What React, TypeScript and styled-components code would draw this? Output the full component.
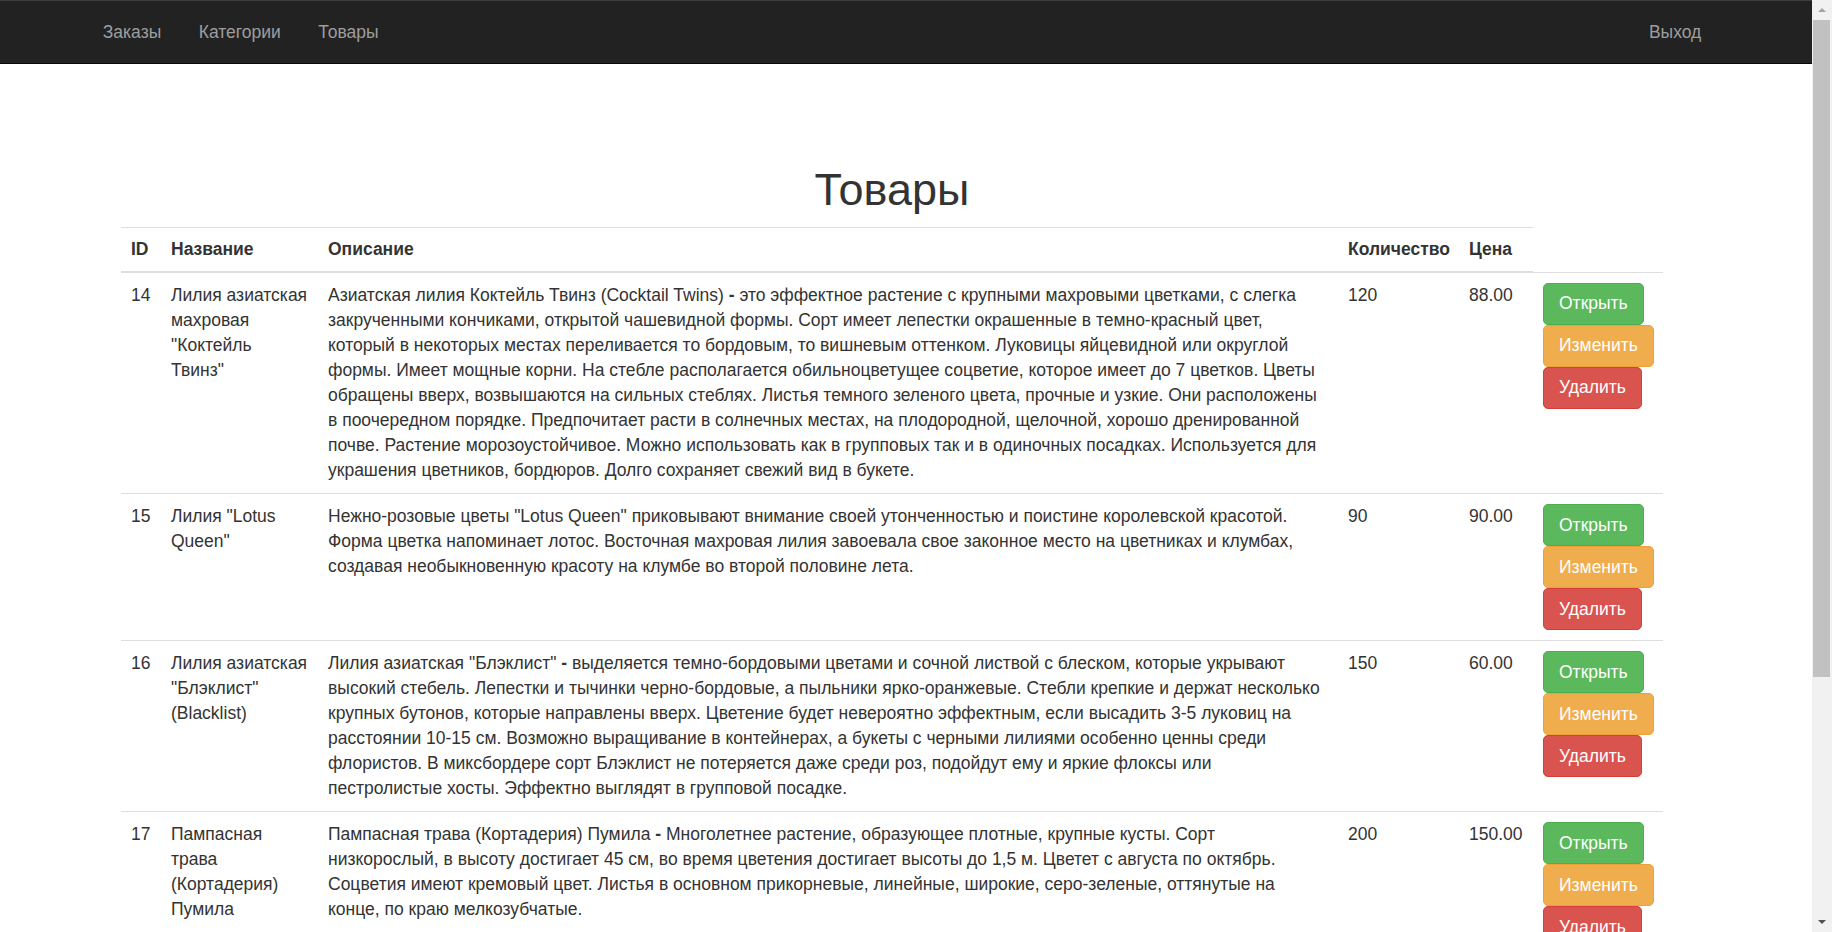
import React from "react";
import styled, { createGlobalStyle } from "styled-components";

const GlobalStyle = createGlobalStyle`
  html, body {
    margin: 0;
    padding: 0;
    height: 100%;
    overflow: hidden;
    background: #fff;
  }
  body {
    font-family: "Liberation Sans", Arial, Helvetica, sans-serif;
    font-size: 17.5px;
    line-height: 25px;
    color: #333;
  }
  #root { height: 100%; }
  *, *::before, *::after { box-sizing: border-box; }
`;

const Shell = styled.div`
  display: flex;
  height: 100vh;
  width: 100vw;
  overflow: hidden;
`;

const Viewport = styled.div`
  flex: 1;
  min-width: 0;
  overflow: hidden;
  display: flex;
  flex-direction: column;
`;

const Navbar = styled.nav`
  flex: none;
  display: flex;
  justify-content: space-between;
  height: 64px;
  background: #222;
  border-top: 1px solid #3d3d3d;
  border-bottom: 1px solid #080808;
  padding: 0 92px 0 84px;
`;

const NavList = styled.ul`
  display: flex;
  margin: 0;
  padding: 0;
  list-style: none;
`;

const NavLink = styled.a`
  display: block;
  padding: 18.5px 18.75px;
  line-height: 25px;
  color: #9d9d9d;
  text-decoration: none;
`;

const Main = styled.main`
  flex: 1;
  padding: 101px 0 0 121px;
`;

const Content = styled.div`
  width: 1542px;
`;

const Title = styled.h1`
  margin: 0 0 12px;
  font-size: 45px;
  line-height: 49.5px;
  font-weight: 500;
  text-align: center;
  color: #333;
`;

const Table = styled.table`
  width: 1542px;
  table-layout: fixed;
  border-collapse: collapse;
  border-spacing: 0;
`;

const Col = styled.col<{ $w: number }>`
  width: ${(p) => p.$w}px;
`;

const HeadCell = styled.th`
  padding: 9.5px 10px 9px;
  text-align: left;
  vertical-align: bottom;
  font-weight: bold;
  border-top: 1px solid #ddd;
  border-bottom: 2px solid #ddd;
`;

const Cell = styled.td`
  padding: 10px;
  vertical-align: top;
  border-top: 1px solid #ddd;
`;

const Actions = styled.div`
  display: flex;
  flex-direction: column;
  align-items: flex-start;
`;

const palette = {
  success: { bg: "#5cb85c", border: "#4cae4c" },
  warning: { bg: "#f0ad4e", border: "#eea236" },
  danger: { bg: "#d9534f", border: "#d43f3a" },
};

type Variant = keyof typeof palette;

const Button = styled.button<{ $variant: Variant }>`
  display: inline-block;
  margin: 0;
  padding: 7.5px 15px;
  font-family: inherit;
  font-size: 17.5px;
  line-height: 25px;
  color: #fff;
  white-space: nowrap;
  cursor: pointer;
  background: ${(p) => palette[p.$variant].bg};
  border: 1px solid ${(p) => palette[p.$variant].border};
  border-radius: 5px;
`;

const ScrollBar = styled.div`
  flex: none;
  width: 20px;
  height: 100%;
  background: #f1f1f1;
  display: flex;
  flex-direction: column;
`;

const ScrollButton = styled.div`
  flex: none;
  height: 20px;
  display: flex;
  align-items: center;
  justify-content: center;
`;

const Arrow = styled.span<{ $dir: "up" | "down"; $color: string }>`
  width: 0;
  height: 0;
  border-left: 4px solid transparent;
  border-right: 4px solid transparent;
  ${(p) =>
    p.$dir === "up"
      ? `border-bottom: 4px solid ${p.$color};`
      : `border-top: 4px solid ${p.$color};`}
`;

const Thumb = styled.div`
  flex: none;
  height: 657px;
  margin: 0 2px 0 1px;
  background: #c1c1c1;
`;

const Spacer = styled.div`
  flex: 1;
`;

type Product = {
  id: number;
  name: string;
  lead?: string;
  rest: string;
  plain?: string;
  qty: number;
  price: string;
};

const products: Product[] = [
  {
    id: 14,
    name: 'Лилия азиатская махровая "Коктейль Твинз"',
    lead: "Азиатская лилия Коктейль Твинз (Cocktail Twins) ",
    rest:
      " это эффектное растение с крупными махровыми цветками, с слегка закрученными кончиками, открытой чашевидной формы. Сорт имеет лепестки окрашенные в темно-красный цвет, который в некоторых местах переливается то бордовым, то вишневым оттенком. Луковицы яйцевидной или округлой формы. Имеет мощные корни. На стебле располагается обильноцветущее соцветие, которое имеет до 7 цветков. Цветы обращены вверх, возвышаются на сильных стеблях. Листья темного зеленого цвета, прочные и узкие. Они расположены в поочередном порядке. Предпочитает расти в солнечных местах, на плодородной, щелочной, хорошо дренированной почве. Растение морозоустойчивое. Можно использовать как в групповых так и в одиночных посадках. Используется для украшения цветников, бордюров. Долго сохраняет свежий вид в букете.",
    qty: 120,
    price: "88.00",
  },
  {
    id: 15,
    name: 'Лилия "Lotus Queen"',
    rest: "",
    plain:
      'Нежно-розовые цветы "Lotus Queen" приковывают внимание своей утонченностью и поистине королевской красотой. Форма цветка напоминает лотос. Восточная махровая лилия завоевала свое законное место на цветниках и клумбах, создавая необыкновенную красоту на клумбе во второй половине лета.',
    qty: 90,
    price: "90.00",
  },
  {
    id: 16,
    name: 'Лилия азиатская "Блэклист" (Blacklist)',
    lead: 'Лилия азиатская "Блэклист" ',
    rest:
      " выделяется темно-бордовыми цветами и сочной листвой с блеском, которые укрывают высокий стебель. Лепестки и тычинки черно-бордовые, а пыльники ярко-оранжевые. Стебли крепкие и держат несколько крупных бутонов, которые направлены вверх. Цветение будет невероятно эффектным, если высадить 3-5 луковиц на расстоянии 10-15 см. Возможно выращивание в контейнерах, а букеты с черными лилиями особенно ценны среди флористов. В миксбордере сорт Блэклист не потеряется даже среди роз, подойдут ему и яркие флоксы или пестролистые хосты. Эффектно выглядят в групповой посадке.",
    qty: 150,
    price: "60.00",
  },
  {
    id: 17,
    name: "Пампасная трава (Кортадерия) Пумила",
    lead: "Пампасная трава (Кортадерия) Пумила ",
    rest:
      " Многолетнее растение, образующее плотные, крупные кусты. Сорт низкорослый, в высоту достигает 45 см, во время цветения достигает высоты до 1,5 м. Цветет с августа по октябрь. Соцветия имеют кремовый цвет. Листья в основном прикорневые, линейные, широкие, серо-зеленые, оттянутые на конце, по краю мелкозубчатые.",
    qty: 200,
    price: "150.00",
  },
];

const colWidths = [40, 157, 1020, 121, 74, 130];

export default function App() {
  return (
    <>
      <GlobalStyle />
      <Shell>
        <Viewport>
          <Navbar>
            <NavList>
              <li><NavLink href="#">Заказы</NavLink></li>
              <li><NavLink href="#">Категории</NavLink></li>
              <li><NavLink href="#">Товары</NavLink></li>
            </NavList>
            <NavList>
              <li><NavLink href="#">Выход</NavLink></li>
            </NavList>
          </Navbar>
          <Main>
            <Content>
              <Title>Товары</Title>
              <Table>
                <colgroup>
                  {colWidths.map((w, i) => (
                    <Col key={i} $w={w} />
                  ))}
                </colgroup>
                <thead>
                  <tr>
                    <HeadCell>ID</HeadCell>
                    <HeadCell>Название</HeadCell>
                    <HeadCell>Описание</HeadCell>
                    <HeadCell>Количество</HeadCell>
                    <HeadCell>Цена</HeadCell>
                  </tr>
                </thead>
                <tbody>
                  {products.map((p) => (
                    <tr key={p.id}>
                      <Cell>{p.id}</Cell>
                      <Cell>{p.name}</Cell>
                      <Cell>
                        {p.plain ? (
                          p.plain
                        ) : (
                          <>
                            {p.lead}
                            <strong>-</strong>
                            {p.rest}
                          </>
                        )}
                      </Cell>
                      <Cell>{p.qty}</Cell>
                      <Cell>{p.price}</Cell>
                      <Cell>
                        <Actions>
                          <Button $variant="success">Открыть</Button>
                          <Button $variant="warning">Изменить</Button>
                          <Button $variant="danger">Удалить</Button>
                        </Actions>
                      </Cell>
                    </tr>
                  ))}
                </tbody>
              </Table>
            </Content>
          </Main>
        </Viewport>
        <ScrollBar>
          <ScrollButton>
            <Arrow $dir="up" $color="#a3a3a3" />
          </ScrollButton>
          <Thumb />
          <Spacer />
          <ScrollButton>
            <Arrow $dir="down" $color="#505050" />
          </ScrollButton>
        </ScrollBar>
      </Shell>
    </>
  );
}
